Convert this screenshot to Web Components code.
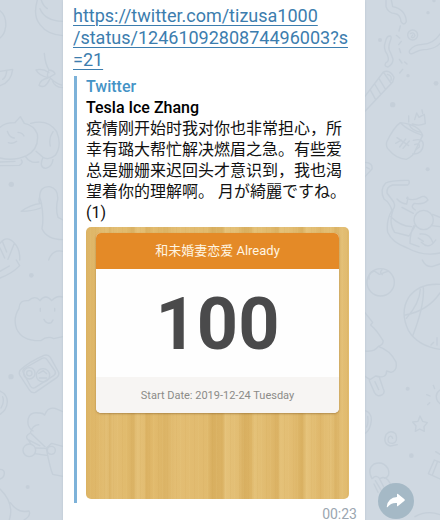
<!DOCTYPE html>
<html lang="zh">
<head>
<meta charset="utf-8">
<meta name="viewport" content="width=device-width, initial-scale=1">
<title>Chat message</title>
<style>
  body { margin: 0; font-family: Roboto, "Noto Sans CJK SC", sans-serif; color: #111; }
</style>
</head>
<body>
<chat-view>
  <message-bubble time="00:23">
    <message-link slot="link" href="https://twitter.com/tizusa1000/status/1246109280874496003?s=21">https://twitter.com/tizusa1000<br>/status/1246109280874496003?s<br>=21</message-link>
    <link-preview site="Twitter" heading="Tesla Ice Zhang">
      疫情刚开始时我对你也非常担心，所<br>幸有璐大帮忙解决燃眉之急。有些爱<br>总是姗姗来迟回头才意识到，我也渴<br>望着你的理解啊。 <span lang="ja">月が綺麗ですね。</span><br>(1)
      <day-counter slot="media" count="100">
        <span slot="title">和未婚妻恋爱 Already</span>
        <span slot="date">Start Date: 2019-12-24 Tuesday</span>
      </day-counter>
    </link-preview>
  </message-bubble>
  <share-button slot="action"></share-button>
</chat-view>

<script>
const define = (name, html, setup) => {
  const template = document.createElement('template');
  template.innerHTML = html;
  customElements.define(name, class extends HTMLElement {
    connectedCallback() {
      if (this.shadowRoot) return;
      const root = this.attachShadow({ mode: 'open' });
      root.append(template.content.cloneNode(true));
      if (setup) setup(this, root);
    }
  });
};

/* Faint doodles at both edges of the chat */
define('chat-wallpaper', `
  <style>
    :host { position: absolute; inset: 0; display: flex; justify-content: space-between; overflow: hidden; }
    svg { flex: none; fill: none; stroke: #bfcad5; stroke-width: 4; stroke-linecap: round; stroke-linejoin: round; opacity: .6; }
    .dot { fill: #c0cad5; stroke: none; }
  </style>
  <svg width="63" height="520" viewBox="0 0 189 1560" aria-hidden="true">
    <path d="M0 32Q20 48 17 80Q14 104 0 114M112 0Q98 48 120 74Q142 104 189 107M120 26Q134 62 189 64M124 0Q128 16 142 26"/>
    <path d="M0 214L38 208Q34 246 0 257M8 238Q18 232 20 214"/>
    <path d="M133 160Q135 190 147 210Q163 212 165 222L148 232Q168 252 185 255M147 210Q139 224 145 233M145 233Q118 228 108 210Q128 204 147 218M144 234Q121 238 117 256Q136 268 149 238M156 238Q162 262 189 263"/>
    <path d="M0 382Q15 368 45 368L61 350L73 370Q102 376 112 402Q118 446 80 467Q42 484 0 474M92 370Q145 356 170 395Q187 435 166 466Q148 482 129 472L108 454M76 469Q91 492 116 486M129 472Q116 503 137 505Q156 501 159 479M159 395Q145 415 151 438M0 497L58 496Q71 488 64 480M22 394Q29 414 43 414M54 397Q68 398 72 408M25 428Q40 433 50 424M0 486L45 484"/>
    <path d="M119 592Q119 558 149 560Q175 566 173 598Q166 628 174 652L189 660M119 592L124 608Q132 654 126 686Q140 718 189 719M119 592Q114 604 121 611Q91 614 64 634Q96 634 122 624"/>
    <path d="M0 730Q20 704 42 728Q61 746 59 780M7 724L20 756M43 730L24 778M0 744L14 774M146 780Q158 746 189 754"/>
    <g transform="translate(0 780)">
      <path d="M0 54Q38 40 59 17L49 0M0 34L28 18"/>
      <path d="M85 122Q106 104 120 122Q137 100 155 122Q171 105 189 111M85 122Q58 119 57 145Q38 175 50 207Q67 244 122 242Q143 226 161 236L189 230M121 145V154M132 178Q139 194 154 188L159 180M164 145V153"/>
      <path d="M61 330Q86 306 132 286Q144 282 151 292L176 337Q179 346 170 353L106 397Q95 400 89 391L59 345Q56 335 61 330ZM69 336L91 378Q96 387 105 383L162 346Q169 340 165 333L141 299Q136 291 126 295L75 324Q67 329 69 336Z"/>
      <circle cx="88" cy="340" r="17"/><circle cx="88" cy="340" r="8"/><circle cx="129" cy="346" r="20"/><path d="M116 340L130 332L140 341M118 354H140"/>
      <path d="M0 393Q23 404 22 426Q20 451 0 463M8 410Q14 426 3 444"/>
      <path d="M99 513Q79 501 85 475Q91 455 116 459Q128 458 134 465Q143 440 165 445L189 455M116 494Q97 496 91 519Q73 529 84 539L119 557M84 539L92 551M94 521L135 560"/>
      <circle cx="88" cy="571" r="19"/><path d="M139 565L155 550L189 559M139 565Q149 620 158 643L189 649M106 564L139 565M104 581L140 586"/><circle cx="154" cy="571" r="12"/>
      <path d="M0 628Q14 628 13 641Q12 653 0 657M0 687Q44 730 28 780M31 728Q54 761 87 753Q94 767 72 780"/>
      <circle class="dot" cx="94" cy="46" r="7"/><circle class="dot" cx="33" cy="350" r="8"/><circle class="dot" cx="83" cy="681" r="6"/>
    </g>
    <circle class="dot" cx="34" cy="553" r="8"/>
  </svg>
  <svg width="75" height="520" viewBox="15 0 225 1560" aria-hidden="true">
    <path d="M78 0V20Q84 39 105 41Q121 43 123 65Q132 79 139 65Q137 28 98 20L94 0M240 102Q221 131 187 133Q161 134 149 151Q145 163 157 161Q179 148 202 148Q229 144 240 130"/>
    <circle cx="158" cy="105" r="15"/><path d="M158 105L154 111Q160 117 165 107Q161 94 151 101"/>
    <path d="M91 108Q81 107 77 122Q68 146 82 164Q90 184 78 188Q70 199 84 201Q100 191 99 177L91 157Q82 145 91 122Q96 111 91 108"/>
    <path d="M15 289L70 216Q90 207 102 232L98 246L15 334M70 216L94 251M57 236L76 267M44 252L62 282M31 270L47 299M82 223Q97 227 93 241"/>
    <path d="M121 78L117 93M109 106L119 114M124 124L116 134M118 146L122 158M118 178L126 189M134 186L141 192M128 208L119 219"/>
    <path d="M121 368Q101 382 80 426Q76 440 88 451Q106 474 139 478Q162 467 166 451L188 406Q177 374 121 368ZM121 368Q143 391 188 406M147 373Q156 394 184 397M160 421Q189 413 190 434Q187 464 158 462M164 434Q181 427 178 441L166 451M146 366V348M157 372Q177 379 196 371L193 343L177 352L170 339L164 359M186 330L188 340M111 413L146 437M107 430L124 420M137 417L119 441M129 445L148 423"/>
    <path d="M146 541Q151 549 143 555H98Q79 560 81 579L101 606Q108 622 96 631Q89 608 72 597Q58 569 77 549Q94 540 146 541ZM140 612Q147 583 140 595Q160 604 181 592Q194 583 204 600Q191 615 163 610Q149 620 166 630M111 597Q122 610 140 612"/>
    <circle cx="191" cy="660" r="29"/><path d="M96 631Q78 660 83 697Q96 728 142 744Q190 770 240 759M99 630Q85 669 104 697L147 708L166 677M126 622L160 640M92 650Q122 679 155 680M162 677Q150 699 150 730L177 740M218 643L240 652M215 677L240 680M180 702Q209 699 219 728M184 727Q207 751 227 720M175 714L190 724"/>
    <path d="M15 487Q39 488 36 507L15 530M20 502L28 507"/>
    <circle class="dot" cx="60" cy="120" r="6"/><circle class="dot" cx="98" cy="314" r="8"/><circle class="dot" cx="228" cy="250" r="7"/><circle class="dot" cx="203" cy="508" r="6"/><circle class="dot" cx="204" cy="38" r="5"/><circle class="dot" cx="144" cy="227" r="5"/><circle class="dot" cx="222" cy="2" r="5"/>
    <g transform="translate(0 780)">
      <circle cx="62" cy="67" r="41"/><path d="M27 57Q24 37 43 33L58 43L83 34M66 29Q57 38 67 44"/>
      <path d="M187 0Q195 20 216 20L240 12"/>
      <path d="M240 73Q177 69 146 112Q119 156 145 211Q173 258 240 268M136 165Q203 153 240 99M190 83Q194 135 158 228M181 88Q179 130 139 175M213 255L221 247M231 233V255"/>
      <path d="M15 158L38 187L32 195Q51 211 69 242Q71 254 55 259Q91 271 108 306Q113 332 93 337L80 333Q80 357 47 348L30 359L15 349M15 273Q42 277 55 259M28 362L43 397Q52 413 67 404Q76 397 70 387L58 352M45 365L56 389"/>
      <path d="M180 468L188 484L202 488L192 500L193 514L179 507L166 514L168 498L158 486L174 484Z"/>
      <path d="M98 535Q93 523 86 532Q79 551 98 550Q116 545 107 521Q91 508 78 524Q67 551 91 558L112 554"/>
      <path d="M15 452Q35 458 34 481Q31 511 15 520M23 469Q26 488 20 501"/>
      <path d="M36 656Q20 627 42 612Q69 602 84 626Q93 649 73 655M38 655Q47 643 60 656Q72 648 83 659L104 691M46 662L66 695M59 657L81 700M42 672L54 697"/>
      <path d="M227 575L240 583M205 641L223 600L240 607M205 641L240 657M217 645L233 604M200 404L210 408M220 376L224 386M240 390Q222 402 233 424L240 431M209 428L203 434"/>
      <path d="M165 770Q201 749 240 764"/>
      <circle class="dot" cx="143" cy="386" r="6"/><circle class="dot" cx="154" cy="587" r="7"/>
    </g>
  </svg>`);

define('chat-view', `
  <style>
    :host { display: block; position: relative; height: 100vh; overflow: hidden; background: #cfd8e1; }
    main { position: relative; display: grid; grid-template-columns: 63px minmax(0, 1fr) 75px; grid-template-rows: minmax(0, 1fr); height: 100%; }
    .message { grid-column: 2; }
    .action { grid-column: 3; align-self: end; padding: 0 0 1px 13px; }
  </style>
  <chat-wallpaper></chat-wallpaper>
  <main>
    <div class="message"><slot></slot></div>
    <div class="action"><slot name="action"></slot></div>
  </main>`);

define('message-bubble', `
  <style>
    :host { display: block; background: #fff; padding: 5px 8px 8px 10px; box-shadow: 0 0 2px #b9c5d1; }
    time { display: block; margin-top: 4px; text-align: right; font-size: 14px; line-height: 14px; color: #9ba6b0; }
  </style>
  <slot name="link"></slot>
  <slot></slot>
  <time></time>`,
  (host, root) => { root.querySelector('time').textContent = host.getAttribute('time'); });

define('message-link', `
  <style>
    :host { display: block; font-size: 18px; line-height: 22px; }
    a { color: #3c7dae; text-decoration: underline; text-decoration-thickness: 1px; text-underline-offset: 3px; white-space: nowrap; }
  </style>
  <a><slot></slot></a>`,
  (host, root) => { root.querySelector('a').href = host.getAttribute('href'); });

define('link-preview', `
  <style>
    :host { display: block; margin: 5px 8px 0 1px; padding: 0 0 4px 9px; border-left: 3px solid #7db2d9; font-size: 16px; line-height: 21px; }
    .site, h2 { margin: 0; font-size: 16px; line-height: 21px; font-weight: 500; }
    .site { color: #4493c6; }
    h2 { color: #000; }
    .text { white-space: nowrap; }
    .media { margin-top: 4px; }
  </style>
  <div class="site"></div>
  <h2></h2>
  <div class="text"><slot></slot></div>
  <div class="media"><slot name="media"></slot></div>`,
  (host, root) => {
    root.querySelector('.site').textContent = host.getAttribute('site');
    root.querySelector('h2').textContent = host.getAttribute('heading');
  });

define('day-counter', `
  <style>
    :host {
      display: block; padding: 6px 10px 86px; border-radius: 5px; text-align: center; white-space: nowrap;
      background:
        linear-gradient(#e2bd7280, #e2bd7280),
        repeating-linear-gradient(90deg, #b9852f20 0 1px, #0000 1px 4px, #fff0b418 4px 5px, #0000 5px 9px),
        linear-gradient(90deg, #d8ac58 0, #deb566 5%, #e4c078 8%, #d5aa5a 9%, #e2bd74 10%, #e0b969 15%, #d2a655 18%, #e7c57f 19.5%, #e3bd72 22%, #d4a653 23%, #e1b868 26%, #d5aa59 30%, #e4be74 34%, #e0b86b 46%, #cfa14d 48%, #d4a856 52%, #e7c681 53%, #e2bd73 58%, #cea04d 60%, #d8ad5b 63%, #e7c67f 64%, #ddb466 70%, #d3a654 73%, #e7c680 74%, #e1b96e 79%, #d0a450 82%, #e9c984 84%, #dcb264 89%, #e6c47d 93%, #d3a858 95%, #e4c078 97%, #dfb767 100%);
    }
    section { overflow: hidden; border-radius: 5px; background: #fefefe; box-shadow: 0 1px 2px #8c652f90; }
    header { background: #e48a27; color: #fff5e2; font-size: 13px; line-height: 36px; }
    strong { display: block; padding-top: 4px; font-size: 72px; line-height: 104px; font-weight: 700; color: #4a4a4b; }
    footer { padding-top: 2px; background: #f7f5f3; color: #8b8b88; font-size: 11px; line-height: 34px; }
  </style>
  <section>
    <header><slot name="title"></slot></header>
    <strong></strong>
    <footer><slot name="date"></slot></footer>
  </section>`,
  (host, root) => { root.querySelector('strong').textContent = host.getAttribute('count'); });

define('share-button', `
  <style>
    :host { display: block; }
    button { display: grid; place-items: center; width: 36px; height: 36px; padding: 0; border: 0; border-radius: 50%; background: #a5b9c6; }
  </style>
  <button type="button" aria-label="Share">
    <svg width="20" height="16" viewBox="0 0 20 16" aria-hidden="true"><path d="M11 1.3Q11 .2 12 .9L18.5 6.2Q19.2 7 18.5 7.8L12 13.1Q11 13.7 11 12.7V10Q5 9.4 1.4 14.2Q.7 14.7 .8 13.5Q2 4.8 11 4.1Z" fill="#fff"/></svg>
  </button>`);
</script>
</body>
</html>
